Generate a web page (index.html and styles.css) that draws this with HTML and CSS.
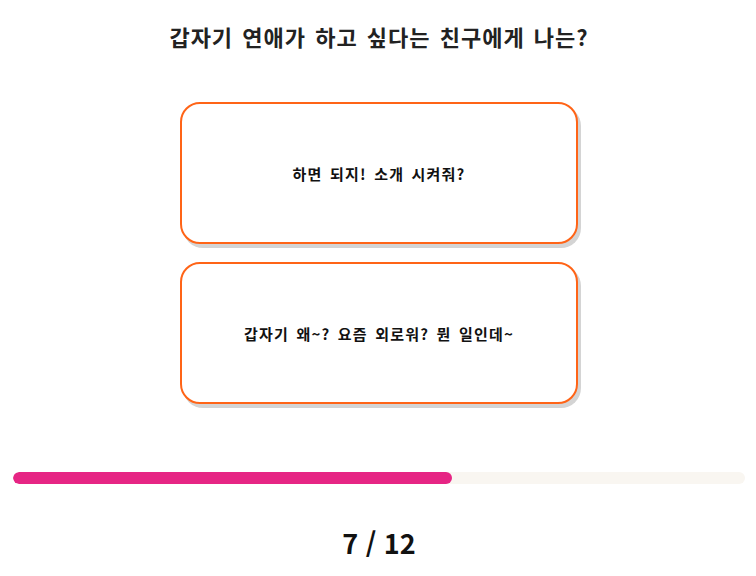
FILE: index.html
```html
<!DOCTYPE html>
<html lang="ko">
<head>
<meta charset="utf-8">
<link rel="stylesheet" href="styles.css">
</head>
<body>
<main class="quiz">
  <h1 class="question">갑자기 연애가 하고 싶다는 친구에게 나는?</h1>
  <div class="answers">
    <button class="answer">하면 되지! 소개 시켜줘?</button>
    <button class="answer">갑자기 왜~? 요즘 외로워? 뭔 일인데~</button>
  </div>
  <div class="progress"><div class="progress-fill" style="width:60%"></div></div>
  <div class="count">7 / 12</div>
</main>
</body>
</html>
```
FILE: styles.css
```css
* { box-sizing: border-box; }
html, body { margin: 0; padding: 0; background: #fff; }
body { font-family: "Noto Sans CJK KR", "Noto Sans", sans-serif; color: #222; }
.quiz { width: 756px; padding: 20px 11px 0 13px; display: flex; flex-direction: column; align-items: center; }
.question { margin: 0; font-size: 22px; font-weight: 700; line-height: 32px; color: #222; letter-spacing: 1px; word-spacing: 2px; }
.answers { margin-top: 50px; display: flex; flex-direction: column; gap: 18px; }
.answer {
  width: 398px; height: 142px; background: #fff;
  border: 2px solid #ff6417; border-radius: 20px;
  box-shadow: 3px 4px 0 #d4d4d4;
  font-family: inherit; font-size: 15px; font-weight: 700; color: #111; letter-spacing: 1.2px; word-spacing: 2px;
  display: flex; align-items: center; justify-content: center; padding: 0;
}
.progress { margin-top: 68px; width: 100%; height: 12px; background: #f9f6f1; border-radius: 6px; overflow: hidden; }
.progress-fill { height: 100%; background: #e62584; border-radius: 6px; }
.count { margin-top: 42px; font-size: 27px; font-weight: 700; color: #111; line-height: 34px; }
```
